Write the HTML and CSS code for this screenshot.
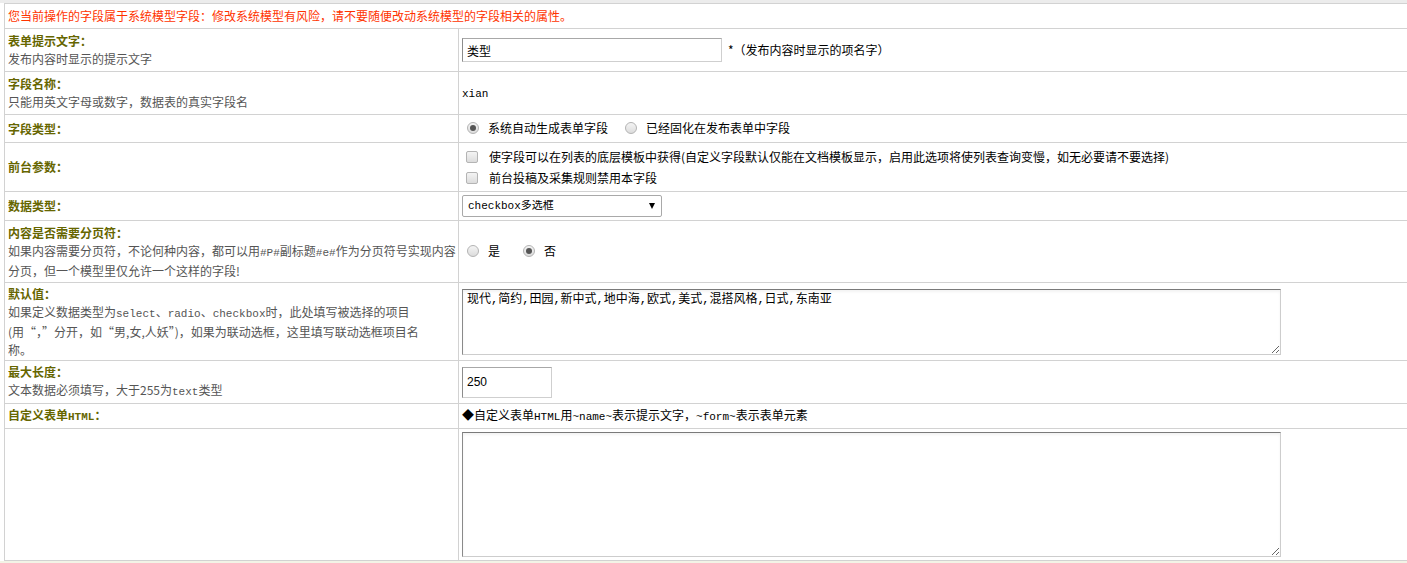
FILE: index.html
```html
<!DOCTYPE html>
<html lang="zh-CN">
<head>
<meta charset="utf-8">
<title>字段编辑</title>
<link rel="stylesheet" href="styles.css">
</head>
<body>
<div class="topbar"></div>
<table class="form">
  <colgroup><col class="c1"><col class="c2"></colgroup>
  <tr class="h24">
    <td colspan="2" class="notice">您当前操作的字段属于系统模型字段：修改系统模型有风险，请不要随便改动系统模型的字段相关的属性。</td>
  </tr>
  <tr class="h42">
    <td class="lbl"><b>表单提示文字：</b><span class="desc">发布内容时显示的提示文字</span></td>
    <td class="val"><input class="txt w-name" type="text" value="类型"><span class="hint">*（发布内容时显示的项名字）</span></td>
  </tr>
  <tr class="h42">
    <td class="lbl"><b>字段名称：</b><span class="desc">只能用英文字母或数字，数据表的真实字段名</span></td>
    <td class="val"><span class="en">xian</span></td>
  </tr>
  <tr class="h27">
    <td class="lbl"><b>字段类型：</b></td>
    <td class="val">
      <label class="opt"><input type="radio" name="ftype" checked>系统自动生成表单字段</label><label class="opt"><input type="radio" name="ftype">已经固化在发布表单中字段</label>
    </td>
  </tr>
  <tr class="h48">
    <td class="lbl"><b>前台参数：</b></td>
    <td class="val">
      <label class="chk"><input type="checkbox">使字段可以在列表的底层模板中获得(自定义字段默认仅能在文档模板显示，启用此选项将使列表查询变慢，如无必要请不要选择)</label>
      <label class="chk"><input type="checkbox">前台投稿及采集规则禁用本字段</label>
    </td>
  </tr>
  <tr class="h28">
    <td class="lbl"><b>数据类型：</b></td>
    <td class="val"><span class="sel-wrap"><select class="sel"><option>checkbox多选框</option></select></span></td>
  </tr>
  <tr class="h61">
    <td class="lbl"><b>内容是否需要分页符：</b><span class="desc">如果内容需要分页符，不论何种内容，都可以用<span class="en">#P#</span>副标题<span class="en">#e#</span>作为分页符号实现内容<br>分页，但一个模型里仅允许一个这样的字段!</span></td>
    <td class="val yn">
      <label class="opt"><input type="radio" name="page">是</label><label class="opt"><input type="radio" name="page" checked>否</label>
    </td>
  </tr>
  <tr class="h77">
    <td class="lbl"><b>默认值：</b><span class="desc">如果定义数据类型为<span class="en">select</span>、<span class="en">radio</span>、<span class="en">checkbox</span>时，此处填写被选择的项目<br>(用<span class="fw">“，”</span>分开，如<span class="fw">“</span>男,女,人妖<span class="fw">”</span>)，如果为联动选框，这里填写联动选框项目名<br>称。</span></td>
    <td class="val"><textarea class="area a-small">现代,简约,田园,新中式,地中海,欧式,美式,混搭风格,日式,东南亚</textarea></td>
  </tr>
  <tr class="h42">
    <td class="lbl"><b>最大长度：</b><span class="desc">文本数据必须填写，大于255为<span class="en">text</span>类型</span></td>
    <td class="val"><input class="txt w-len" type="text" value="250"></td>
  </tr>
  <tr class="h24">
    <td class="lbl"><b>自定义表单<span class="en">HTML</span>：</b></td>
    <td class="val">◆自定义表单<span class="en">HTML</span>用<span class="en">~name~</span>表示提示文字，<span class="en">~form~</span>表示表单元素</td>
  </tr>
  <tr class="h131">
    <td class="lbl"></td>
    <td class="val"><textarea class="area a-big"></textarea></td>
  </tr>
</table>
<div class="bottombar"></div>
</body>
</html>
```

FILE: styles.css
```css
html, body {
  margin: 0;
  padding: 0;
  background: #fff;
}
body {
  font-family: "Noto Sans CJK SC", "Liberation Sans", sans-serif;
  font-size: 12px;
  color: #000;
  overflow: hidden;
}
.topbar {
  height: 3px;
  background: #ececec;
}
.bottombar {
  height: 3px;
  background: #f3f3e6;
}
.form {
  border-collapse: collapse;
  table-layout: fixed;
  width: 1420px;
  margin-left: 4px;
}
.c1 { width: 454px; }
.form td {
  border: 1px solid #d2d2d2;
  padding: 0 3px;
  vertical-align: middle;
  line-height: 18px;
}
.h24 td { height: 24px; }
.h27 td { height: 27px; }
.h28 td { height: 28px; }
.h42 td { height: 42px; }
.h48 td { height: 48px; }
.h61 td { height: 61px; }
.h77 td { height: 77px; }
.h131 td { height: 131px; }

.notice {
  color: #ff3300;
}
.lbl b {
  display: block;
  color: #666600;
  font-weight: bold;
}
.desc {
  display: block;
  color: #555;
  white-space: nowrap;
}
.en {
  font-family: "Liberation Mono", monospace;
  font-size: 11px;
}
.fw {
  font-family: "Noto Sans CJK SC", sans-serif;
  font-feature-settings: "fwid" 1;
}
.txt {
  box-sizing: border-box;
  font-family: "Noto Sans CJK SC", "Liberation Sans", sans-serif;
  font-size: 12px;
  padding: 0 4px;
  margin: 0;
  border: 1px solid #cfcfcf;
  border-left-color: #8c8c8c;
  border-top-color: #a8a8a8;
  background: #fff;
  color: #000;
  vertical-align: middle;
  outline: none;
}
.w-name { width: 260px; height: 24px; }
.w-len { width: 90px; height: 31px; font-family: "Liberation Sans", sans-serif; font-size: 12px; }
.hint {
  margin-left: 6px;
  vertical-align: middle;
}
.opt {
  display: inline-flex;
  align-items: center;
  margin-right: 12px;
}
.yn .opt { margin-right: 18px; }
.chk {
  display: flex;
  align-items: center;
  height: 21px;
}
input[type="radio"],
input[type="checkbox"] {
  appearance: none;
  -webkit-appearance: none;
  box-sizing: border-box;
  width: 12px;
  height: 12px;
  margin: 0 9px 0 5px;
  border: 1px solid #b4b4b4;
  background: linear-gradient(#f4f4f4, #dcdcdc);
  flex: none;
}
input[type="radio"] {
  border-radius: 50%;
  position: relative;
}
input[type="radio"]:checked::after {
  content: "";
  position: absolute;
  left: 2px;
  top: 2px;
  width: 6px;
  height: 6px;
  border-radius: 50%;
  background: #555;
}
input[type="checkbox"] {
  border-radius: 2px;
  margin: 0 11px 0 4px;
}
.sel-wrap {
  position: relative;
  display: inline-block;
  vertical-align: middle;
}
.sel-wrap::after {
  content: "";
  position: absolute;
  right: 7px;
  top: 8px;
  border-left: 3px solid transparent;
  border-right: 3px solid transparent;
  border-top: 6px solid #000;
  pointer-events: none;
}
.sel {
  appearance: none;
  -webkit-appearance: none;
  box-sizing: border-box;
  width: 200px;
  height: 22px;
  margin: 0;
  padding: 0 5px;
  border: 1px solid #a9a9a9;
  border-radius: 2px;
  background: #fff;
  font-family: "Liberation Mono", "Noto Sans CJK SC", monospace;
  font-size: 11px;
  color: #000;
  display: block;
}
.area {
  box-sizing: border-box;
  display: block;
  width: 819px;
  margin: 0;
  padding: 2px 4px;
  border: 1px solid #cdcdcd;
  border-top-color: #7a7a7a;
  border-left-color: #8a8a8a;
  box-shadow: inset 0 2px 3px rgba(0, 0, 0, 0.05);
  font-family: "Liberation Mono", "Noto Sans CJK SC", monospace;
  font-size: 12px;
  line-height: 16px;
  color: #000;
  outline: none;
}
.a-small { height: 66px; }
.a-big { height: 125px; }
```
